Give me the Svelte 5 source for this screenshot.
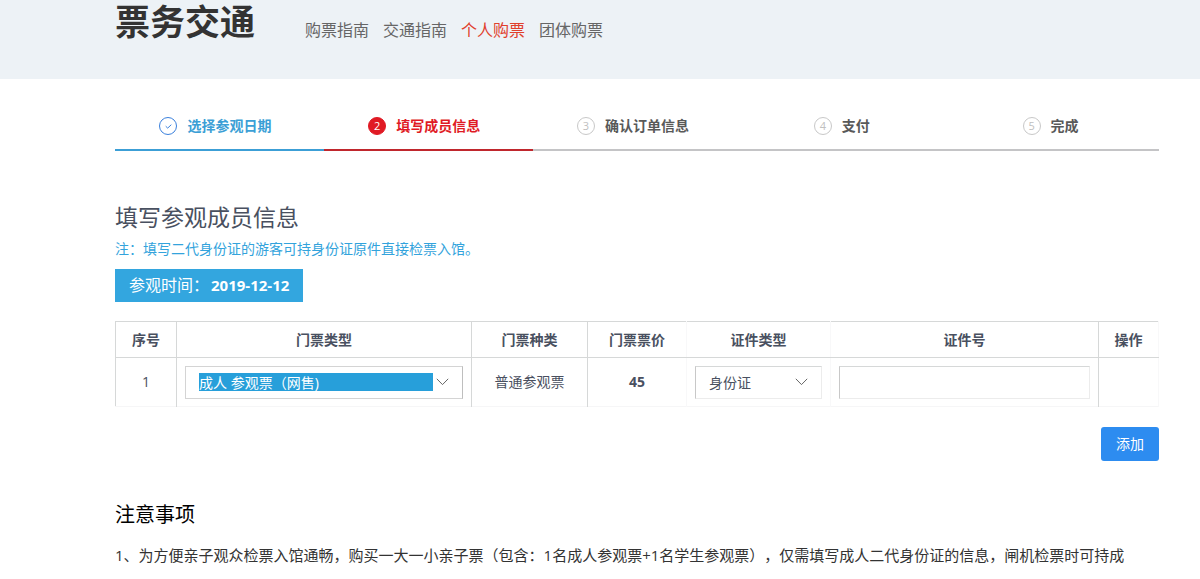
<script>
  const links = [
    { label: '购票指南' },
    { label: '交通指南' },
    { label: '个人购票', active: true },
    { label: '团体购票' }
  ];

  const steps = [
    { label: '选择参观日期', state: 'done' },
    { label: '填写成员信息', state: 'current' },
    { label: '确认订单信息', state: 'wait' },
    { label: '支付', state: 'wait' },
    { label: '完成', state: 'wait' }
  ];

  let ticket = $state('adult');
  let idType = $state('id');
  let idNumber = $state('');
</script>

<header class="top">
  <h1>票务交通</h1>
  <nav>
    {#each links as link}
      <a href="#top" class:active={link.active}>{link.label}</a>
    {/each}
  </nav>
</header>

<main>
  <ol class="steps">
    {#each steps as step, i}
      <li class={step.state}>
        <span class="dot">
          {#if step.state === 'done'}
            <svg width="7" height="5" viewBox="0 0 7 5" aria-hidden="true">
              <path d="M0.7 2.2 L2.7 4.1 L6.3 0.7" fill="none" stroke="currentColor" />
            </svg>
          {:else}
            {i + 1}
          {/if}
        </span>
        <span>{step.label}</span>
      </li>
    {/each}
  </ol>

  <h2>填写参观成员信息</h2>
  <p class="hint">注：填写二代身份证的游客可持身份证原件直接检票入馆。</p>
  <p class="visit">参观时间：<strong>2019-12-12</strong></p>

  <table>
    <colgroup>
      <col class="c-no" />
      <col class="c-type" />
      <col class="c-kind" />
      <col class="c-price" />
      <col class="c-idtype" />
      <col class="c-id" />
      <col class="c-op" />
    </colgroup>
    <thead>
      <tr>
        <th>序号</th>
        <th>门票类型</th>
        <th>门票种类</th>
        <th class="faint">门票票价</th>
        <th class="faint">证件类型</th>
        <th>证件号</th>
        <th class="faint">操作</th>
      </tr>
    </thead>
    <tbody>
      <tr>
        <td>1</td>
        <td>
          <label class="field strong">
            <select class="marked" aria-label="门票类型" bind:value={ticket}>
              <option value="adult">成人 参观票（网售)</option>
            </select>
            <svg width="13" height="8" viewBox="0 0 13 8" aria-hidden="true">
              <path d="M0.8 0.8 L6.5 6.6 L12.2 0.8" fill="none" stroke="#666" />
            </svg>
          </label>
        </td>
        <td>普通参观票</td>
        <td class="faint"><b>45</b></td>
        <td class="faint">
          <label class="field">
            <select aria-label="证件类型" bind:value={idType}>
              <option value="id">身份证</option>
            </select>
            <svg width="13" height="8" viewBox="0 0 13 8" aria-hidden="true">
              <path d="M0.8 0.8 L6.5 6.6 L12.2 0.8" fill="none" stroke="#666" />
            </svg>
          </label>
        </td>
        <td><input class="field" type="text" aria-label="证件号" bind:value={idNumber} /></td>
        <td class="faint"></td>
      </tr>
    </tbody>
  </table>

  <div class="actions"><button type="button">添加</button></div>

  <h3>注意事项</h3>
  <p class="notice">1、为方便亲子观众检票入馆通畅，购买一大一小亲子票（包含：1名成人参观票+1名学生参观票），仅需填写成人二代身份证的信息，闸机检票时可持成</p>
</main>

<style>
  :global(body) {
    background: #fff;
    color: #495060;
    font-family: 'Open Sans', 'Noto Sans CJK SC', sans-serif;
    font-size: 14px;
    line-height: 20px;
    text-spacing-trim: space-all;
  }
  h1, h2, h3, p, ol { margin: 0; padding: 0; font-weight: 400; }

  .top {
    display: flex;
    align-items: flex-start;
    gap: 50px;
    padding: 0 41px 35px 115px;
    background: #edf2f6;
  }
  h1 { font-size: 35px; line-height: 44px; font-weight: 700; color: #333; }
  nav { display: flex; gap: 14px; padding-top: 19px; }
  nav a { font-size: 16px; line-height: 22px; color: #666; text-decoration: none; }
  nav a.active { color: #e0402c; }

  main { padding: 30px 41px 0 115px; }

  .steps { display: flex; list-style: none; }
  .steps li {
    flex: 1;
    display: flex;
    align-items: center;
    justify-content: center;
    gap: 10px;
    padding: 7px 8px 13px 0;
    border-bottom: 2px solid #c4c4c6;
    color: #595959;
    font-weight: 700;
  }
  .steps .dot {
    display: flex;
    align-items: center;
    justify-content: center;
    box-sizing: border-box;
    width: 18px;
    height: 18px;
    border: 1px solid #c8c8c8;
    border-radius: 50%;
    color: #c0c0c0;
    font-size: 11px;
    line-height: 16px;
    font-weight: 400;
  }
  .steps .done { color: #3c9fd6; border-color: #3c9fd6; }
  .steps .done .dot { color: #3a80dc; border-color: #3a80dc; }
  .steps .current { color: #e01a24; border-color: #c0272d; }
  .steps .current .dot { color: #fff; background: #e01a24; border-color: #e01a24; }

  h2 { margin-top: 50px; font-size: 23px; line-height: 32px; }
  .hint { margin-top: 6px; color: #33a3dc; }
  .visit {
    width: fit-content;
    margin-top: 10px;
    padding: 0 14px;
    background: #33a6df;
    color: #fff;
    font-size: 16px;
    line-height: 33px;
  }
  .visit strong { margin-left: 2px; font-size: 15px; }

  table {
    width: 100%;
    margin-top: 19px;
    table-layout: fixed;
    border-collapse: collapse;
    border: 1px solid #f6f6f7;
    border-top-color: #d6d8d8;
    border-left-color: #d6d8d8;
  }
  .c-no { width: 61px; }
  .c-type { width: 295px; }
  .c-kind { width: 116px; }
  .c-price { width: 99px; }
  .c-idtype { width: 144px; }
  .c-op { width: 60px; }
  th, td { padding: 0 8px; text-align: center; border-right: 1px solid #d6d8d8; }
  th { height: 35px; padding: 0; border-bottom: 1px solid #d6d8d8; font-weight: 700; }
  td { height: 48px; }
  .faint { border-right-color: #f8f8f9; }

  .field {
    display: flex;
    align-items: center;
    gap: 3px;
    box-sizing: border-box;
    width: 100%;
    height: 33px;
    padding: 0 13px;
    border: 1px solid #ececec;
    border-top-color: #d6d8d8;
    border-left-color: #c8c8c8;
    background: #fff;
    outline: 0;
    font: inherit;
    color: inherit;
  }
  .field.strong { border-color: #d4d4d4; border-right-color: #bebebe; }
  .field svg { flex: none; }
  select {
    flex: 1;
    min-width: 0;
    height: 18px;
    padding: 0;
    border: 0;
    border-radius: 0;
    outline: 0;
    appearance: none;
    background: none;
    font: inherit;
    line-height: 17px;
    color: inherit;
  }
  .marked { background: #279fda; color: #fff; }
  option { background: #fff; color: #495060; }

  .actions { display: flex; justify-content: flex-end; margin-top: 20px; }
  button {
    height: 34px;
    padding: 0 15px;
    border: 0;
    border-radius: 3px;
    background: #2d8cf0;
    color: #fff;
    font: inherit;
  }

  h3 { margin-top: 40px; font-size: 20px; line-height: 28px; color: #000; }
  .notice { margin-top: 14px; font-size: 15px; line-height: 24px; color: #333; }
</style>
